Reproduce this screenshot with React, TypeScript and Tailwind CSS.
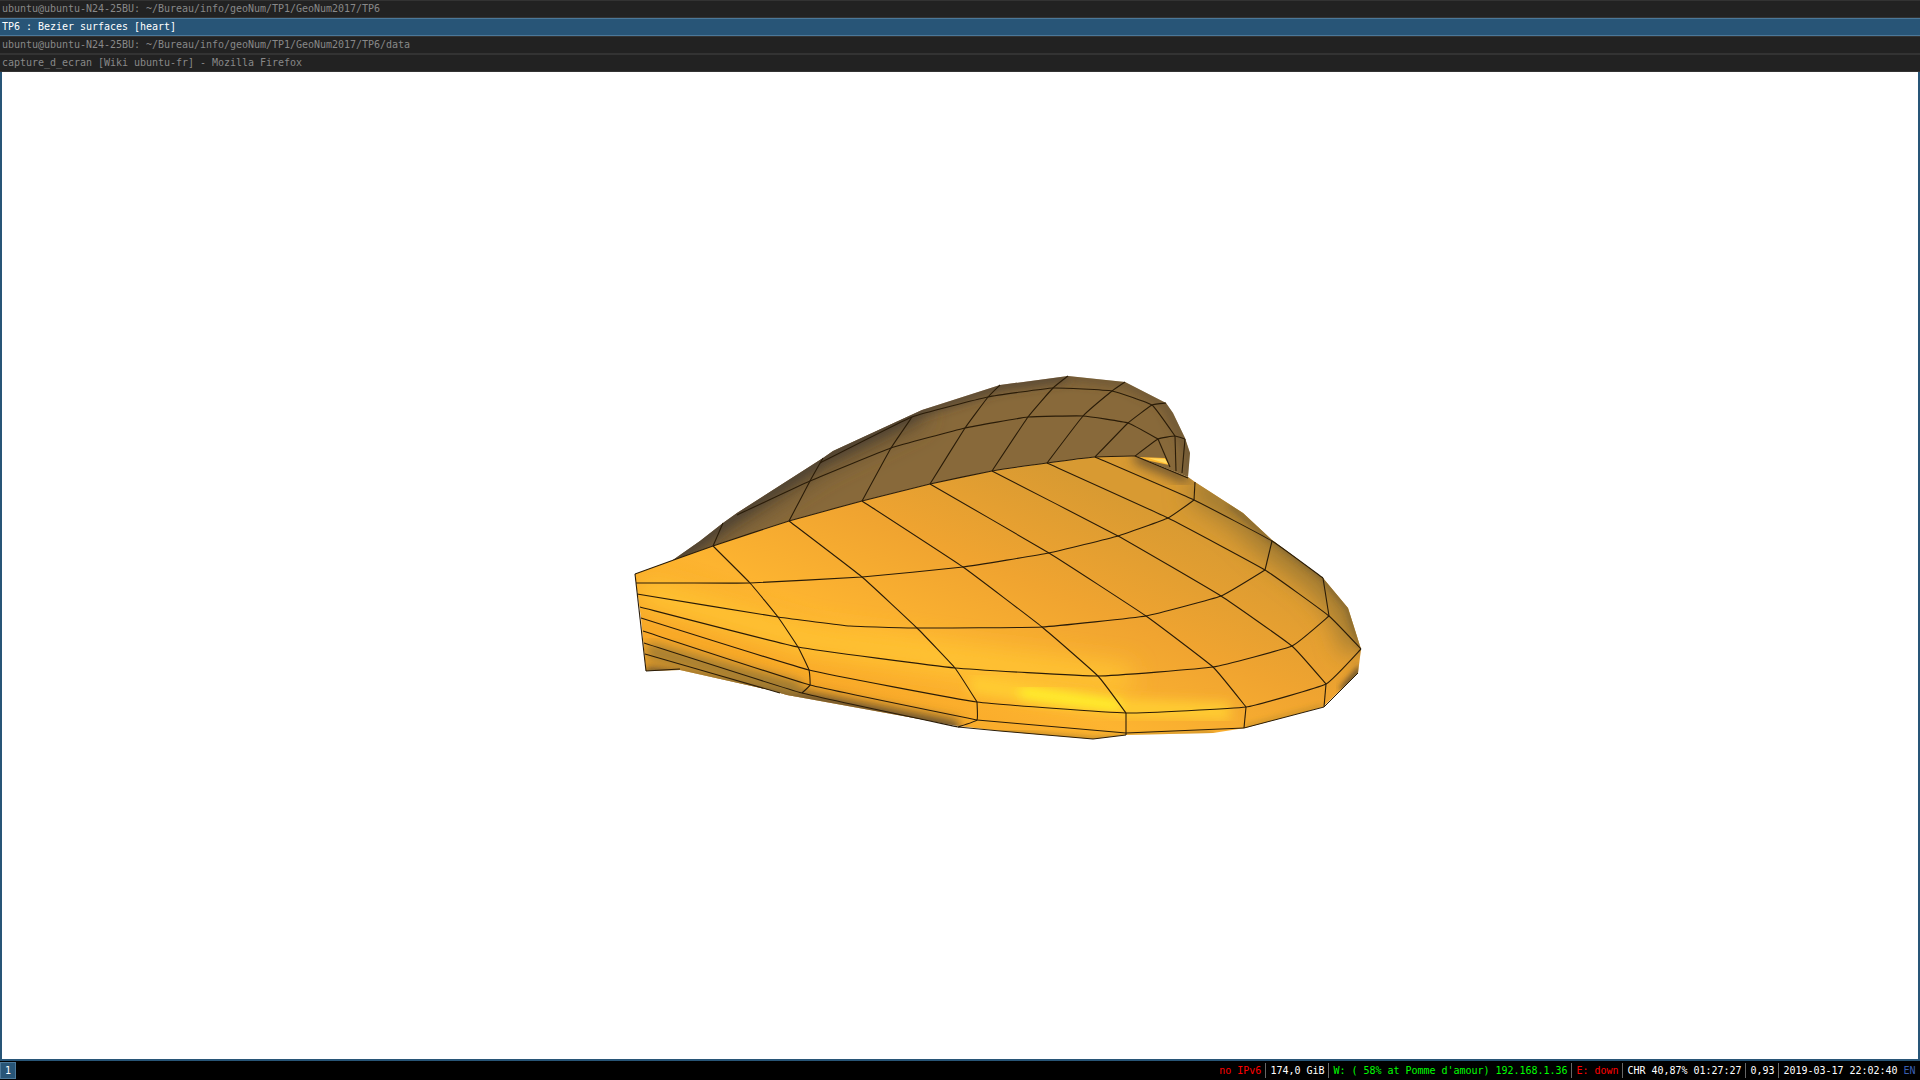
const F = "font-['DejaVu_Sans_Mono',monospace] tracking-[-0.02px]";

type P = [number, number];
const path = (pts: P[]) => "M" + pts.map((p) => p.join(",")).join(" L");

const smooth = (pts: P[]) => {
  let d = `M${pts[0][0]},${pts[0][1]}`;
  for (let i = 0; i < pts.length - 1; i++) {
    const p0 = pts[Math.max(i - 1, 0)];
    const p1 = pts[i];
    const p2 = pts[i + 1];
    const p3 = pts[Math.min(i + 2, pts.length - 1)];
    const c1x = p1[0] + (p2[0] - p0[0]) / 18;
    const c1y = p1[1] + (p2[1] - p0[1]) / 18;
    const c2x = p2[0] - (p3[0] - p1[0]) / 18;
    const c2y = p2[1] - (p3[1] - p1[1]) / 18;
    d += ` C${c1x},${c1y} ${c2x},${c2y} ${p2[0]},${p2[1]}`;
  }
  return d;
};

const backOutline: P[] = [
  [635,574],[670,562],[700,541],[723,523],[737,513],[823,458],[833,451],[922,410],[1000,385],[1068,376],[1125,382],[1166,403],[1173,413],[1185,438],[1190,453],[1188,477],[1135,456],[1095,457],[1047,463],[992,471],[930,484],[862,501],[789,521],[713,546],
];

const frontOutline: P[] = [
  [635,574],[713,546],[789,521],[862,501],[930,484],[992,471],[1047,463],[1095,457],[1135,456],[1188,477],[1195,482],[1243,513],[1272,540],[1323,578],[1348,608],[1361,649],[1358,673],[1323,707],[1245,728],[1213,733],[1125,735],[1093,739],[1000,731],[958,726],[787,695],[770,690],[680,670],[646,671],[641,618],
];

const lines: P[][] = [
  // back, going up
  [[723,523],[713,546]],
  [[789,521],[810,481],[823,458]],
  [[862,501],[891,448],[912,417]],
  [[930,484],[965,428],[988,397],[1000,385]],
  [[992,471],[1028,417],[1053,388],[1068,376]],
  [[1047,463],[1083,416],[1112,391],[1125,382]],
  [[1095,457],[1128,423],[1152,405],[1166,403]],
  [[1135,456],[1158,439],[1175,436],[1185,439]],
  [[737,515],[810,481],[891,448],[965,428],[1028,417],[1083,416],[1128,423],[1158,439]],
  [[820,463],[912,417],[988,397],[1053,388],[1112,391],[1152,405],[1175,436]],
  [[1158,439],[1170,467]],
  [[1175,436],[1176,471]],
  [[1185,439],[1182,473]],
  [[1135,456],[1188,478]],
  // edge of the front face
  [[635,574],[713,546],[789,521],[862,501],[930,484],[992,471],[1047,463],[1095,457],[1135,456]],
  [[635,574],[646,671]],
  [[646,671],[680,669]],
  // long direction, front
  [[713,546],[750,583],[778,617],[798,647],[809,670],[810,685],[802,693]],
  [[789,521],[862,577],[917,628],[955,668],[977,702]],
  [[977,702],[977,720],[958,727]],
  [[862,501],[963,567],[1042,627],[1098,676],[1126,713]],
  [[1126,713],[1126,735]],
  [[930,484],[1049,553],[1146,616],[1213,667],[1246,707]],
  [[1246,707],[1244,728]],
  [[992,471],[1118,536],[1221,596],[1292,646],[1326,684]],
  [[1326,684],[1324,707]],
  [[1047,463],[1168,518],[1265,570],[1329,616],[1361,649]],
  [[1095,457],[1194,500],[1272,541],[1323,578]],
  // cross direction, front
  [[636,583],[685,583],[750,583],[862,577],[963,567],[1049,553],[1118,536],[1168,518],[1194,500]],
  [[1194,500],[1195,482]],
  [[637,594],[778,617],[850,626],[917,628],[1042,627],[1146,616],[1221,596],[1265,570]],
  [[1265,570],[1272,541]],
  [[640,607],[798,647],[955,668],[1098,676],[1213,667],[1292,646],[1329,616]],
  [[1329,616],[1323,578]],
  [[641,618],[809,670],[977,702],[1126,713],[1246,707],[1326,684],[1361,649]],
  [[643,631],[810,685],[977,720]],
  [[644,643],[802,693],[958,727]],
  [[645,654],[780,693]],
];

const edges: P[][] = [
  [[977,720],[1126,733],[1244,728],[1324,707],[1358,673]],
  [[958,727],[1000,731],[1093,739],[1126,735]],
];

function Heart() {
  return (
    <svg className="block w-full h-full" viewBox="2 72 1916 987" preserveAspectRatio="none">
      <defs>
        <linearGradient id="front" gradientUnits="userSpaceOnUse" x1="1060" y1="470" x2="950" y2="740">
          <stop offset="0" stopColor="#d89a32" />
          <stop offset="0.4" stopColor="#f0a430" />
          <stop offset="0.75" stopColor="#fdb430" />
          <stop offset="1" stopColor="#f8a828" />
        </linearGradient>
        <filter id="b3" x="-30%" y="-30%" width="160%" height="160%"><feGaussianBlur stdDeviation="3" /></filter>
        <filter id="b6" x="-30%" y="-30%" width="160%" height="160%"><feGaussianBlur stdDeviation="6" /></filter>
        <filter id="b12" x="-50%" y="-50%" width="200%" height="200%"><feGaussianBlur stdDeviation="12" /></filter>
        <clipPath id="frontClip"><path d={path(frontOutline) + "Z"} /></clipPath>
        <clipPath id="backClip"><path d={path(backOutline) + "Z"} /></clipPath>
      </defs>

      <path d={path(backOutline) + "Z"} fill="#88693a" />
      <g clipPath="url(#backClip)">
        <path d="M670,562 L723,523 L823,458 L922,410" fill="none" stroke="#5c4c30" strokeWidth="22" filter="url(#b12)" />
        <path d="M670,562 L723,523 L823,458 L922,410 L1000,385 L1068,376" fill="none" stroke="#3f3830" strokeWidth="8" filter="url(#b6)" />
        <path d="M1068,376 L1125,382 L1166,403 L1190,453 L1188,477" fill="none" stroke="#5a4a30" strokeWidth="6" filter="url(#b6)" />
      </g>

      <path d={path(frontOutline) + "Z"} fill="url(#front)" />
      <g clipPath="url(#frontClip)">
        <path d="M640,590 L810,640 L1000,665 L1130,680" fill="none" stroke="#ffc430" strokeWidth="26" filter="url(#b12)" />
        <path d="M970,684 L1060,698 L1125,708 L1230,712" fill="none" stroke="#ffcc30" strokeWidth="18" filter="url(#b6)" />
        <path d="M1020,692 L1120,706" fill="none" stroke="#ffff28" strokeWidth="8" filter="url(#b6)" />
        <path d="M1195,482 L1243,513 L1272,540 L1323,578 L1348,608 L1361,649" fill="none" stroke="#a07a30" strokeWidth="34" filter="url(#b12)" />
        <path d="M1230,505 L1272,540 L1323,578 L1348,608 L1361,649" fill="none" stroke="#4a3e2c" strokeWidth="2" filter="url(#b3)" />
        <path d="M1361,668 L1342,690" fill="none" stroke="#40382c" strokeWidth="5" filter="url(#b3)" />
        <path d="M1135,456 L1188,478" fill="none" stroke="#6a5230" strokeWidth="12" filter="url(#b6)" />
        <path d="M646,671 L770,690 L958,726" fill="none" stroke="#6a5430" strokeWidth="10" filter="url(#b6)" />
        <path d="M646,671 L800,697 L958,727" fill="none" stroke="#40382c" strokeWidth="3" filter="url(#b3)" />
        <path d="M646,650 L800,690" fill="none" stroke="#a07c30" strokeWidth="16" filter="url(#b6)" />
        <path d="M1000,733 L1093,740 L1213,735" fill="none" stroke="#a07828" strokeWidth="4" filter="url(#b3)" />
        <path d="M1245,728 L1323,707" fill="none" stroke="#c08c28" strokeWidth="4" filter="url(#b3)" />
      </g>

      <path d="M1138,457 L1165,458 L1169,465 L1150,461Z" fill="#ffb830" />
      <path d="M1148,458 L1165,459 L1168,464Z" fill="#ffd860" />

      {lines.map((l, i) => (
        <path key={i} d={smooth(l)} fill="none" stroke="#2a1c08" strokeWidth="1.1" strokeLinejoin="round" />
      ))}
      {edges.map((l, i) => (
        <path key={i} d={path(l)} fill="none" stroke="#2a1c08" strokeWidth="1" strokeLinejoin="round" />
      ))}
    </svg>
  );
}

function Title({ children, active }: { children: React.ReactNode; active?: boolean }) {
  return (
    <div
      className={
        active
          ? "h-[18px] shrink-0 bg-[#285577] border-y border-[#4c7899] text-white text-[10px] leading-[16px] pl-[2px] whitespace-pre"
          : "h-[18px] shrink-0 bg-[#222222] border-y border-[#333333] text-[#888888] text-[10px] leading-[16px] pl-[2px] whitespace-pre"
      }
    >
      {children}
    </div>
  );
}

function Sep() {
  return <span className="w-px h-[15px] bg-[#666666] mx-[4px]" />;
}

export default function App() {
  return (
    <div className={`${F} w-[1920px] h-[1080px] flex flex-col overflow-hidden bg-black`}>
      <Title>ubuntu@ubuntu-N24-25BU: ~/Bureau/info/geoNum/TP1/GeoNum2017/TP6</Title>
      <Title active>TP6 : Bezier surfaces [heart]</Title>
      <Title>ubuntu@ubuntu-N24-25BU: ~/Bureau/info/geoNum/TP1/GeoNum2017/TP6/data</Title>
      <Title>capture_d_ecran [Wiki ubuntu-fr] - Mozilla Firefox</Title>
      <div className="flex-1 min-h-0 bg-white border-x-2 border-b-2 border-[#285577]">
        <Heart />
      </div>
      <div className="h-[19px] shrink-0 bg-black flex items-center justify-between text-[10px] leading-[15px] whitespace-pre">
        <div className="w-[16px] h-[17px] bg-[#285577] border border-[#4c7899] text-white text-center leading-[15px]">1</div>
        <div className="flex items-center pr-[4.5px]">
          <span className="text-[#ff0000]">no IPv6</span>
          <Sep />
          <span className="text-white">174,0 GiB</span>
          <Sep />
          <span className="text-[#00ff00]">W: ( 58% at Pomme d'amour) 192.168.1.36</span>
          <Sep />
          <span className="text-[#ff0000]">E: down</span>
          <Sep />
          <span className="text-white">CHR 40,87% 01:27:27</span>
          <Sep />
          <span className="text-white">0,93</span>
          <Sep />
          <span className="text-white">2019-03-17 22:02:40</span>
          <span className="text-[#3a5fb0] ml-[6px]">EN</span>
        </div>
      </div>
    </div>
  );
}
